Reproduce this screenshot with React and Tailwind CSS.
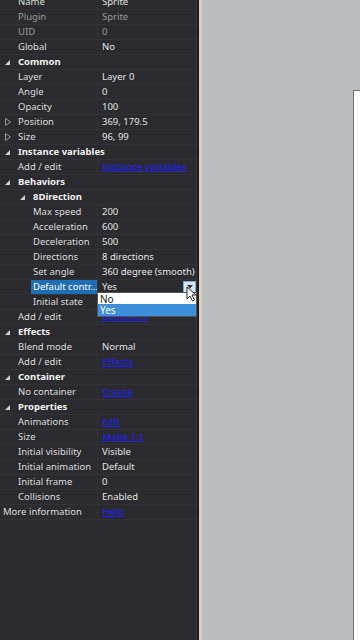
import React from "react";

const rows = [
  { label: "Name", value: "Sprite" },
  { label: "Plugin", value: "Sprite", dim: true },
  { label: "UID", value: "0", dim: true },
  { label: "Global", value: "No" },
  { label: "Common", header: true },
  { label: "Layer", value: "Layer 0" },
  { label: "Angle", value: "0" },
  { label: "Opacity", value: "100" },
  { label: "Position", value: "369, 179.5", collapsed: true },
  { label: "Size", value: "96, 99", collapsed: true },
  { label: "Instance variables", header: true },
  { label: "Add / edit", link: "Instance variables" },
  { label: "Behaviors", header: true },
  { label: "8Direction", header: true, level: 1 },
  { label: "Max speed", value: "200", level: 1 },
  { label: "Acceleration", value: "600", level: 1 },
  { label: "Deceleration", value: "500", level: 1 },
  { label: "Directions", value: "8 directions", level: 1 },
  { label: "Set angle", value: "360 degree (smooth)", level: 1 },
  { label: "Default contr...", value: "Yes", level: 1, selected: true },
  { label: "Initial state", value: "", level: 1 },
  { label: "Add / edit", link: "Behaviors" },
  { label: "Effects", header: true },
  { label: "Blend mode", value: "Normal" },
  { label: "Add / edit", link: "Effects" },
  { label: "Container", header: true },
  { label: "No container", link: "Create" },
  { label: "Properties", header: true },
  { label: "Animations", link: "Edit" },
  { label: "Size", link: "Make 1:1" },
  { label: "Initial visibility", value: "Visible" },
  { label: "Initial animation", value: "Default" },
  { label: "Initial frame", value: "0" },
  { label: "Collisions", value: "Enabled" },
  { label: "More information", link: "Help", level: -1 },
];

const Expanded = () => (
  <svg width="5" height="5" viewBox="0 0 5 5" className="shrink-0">
    <path d="M5 0 L5 5 L0 5 Z" fill="#d0d0d0" />
  </svg>
);

const Collapsed = () => (
  <svg width="6" height="8" viewBox="0 0 6 8" className="shrink-0">
    <path d="M0.5 0.5 L5.5 4 L0.5 7.5 Z" fill="none" stroke="#9a9a9a" strokeWidth="1" />
  </svg>
);

const Row = ({ row }) => {
  const level = row.level || 0;
  const pad = level === -1 ? 3 : 18 + level * 15;
  return (
    <div className="h-[15px] flex items-center border-b border-[#323238] relative">
      {(row.header || row.collapsed) && (
        <div
          className="absolute top-0 h-full flex items-center"
          style={{ left: pad - 13 }}
        >
          {row.header ? <Expanded /> : <Collapsed />}
        </div>
      )}
      <div className="w-[97px] h-full flex items-center shrink-0" style={{ paddingLeft: pad - 2 }}>
        <span
          className={
            "h-full flex items-center px-[2px] whitespace-nowrap " +
            (row.selected ? "bg-[#1f6db3] text-white " : "") +
            (row.header
              ? "font-bold text-[#f2f2f2]"
              : row.dim
              ? "text-[#9c9c9c]"
              : "text-[#dedede]")
          }
          style={row.selected ? { width: 97 - pad + 2 } : undefined}
        >
          {row.label}
        </span>
      </div>
      {!row.header && (
        <div className="flex-1 h-full flex items-center border-l border-[#323238] pl-[4px] whitespace-nowrap">
          {row.link ? (
            <span className="text-[#2222ee] font-semibold underline blur-[0.5px]">{row.link}</span>
          ) : (
            <span className={row.dim ? "text-[#9c9c9c]" : "text-[#e4e4e4]"}>{row.value}</span>
          )}
        </div>
      )}
    </div>
  );
};

export default function App() {
  return (
    <div
      className="w-[360px] h-[640px] flex overflow-hidden text-[9.5px]"
      style={{ fontFamily: '"Noto Sans", "Open Sans", sans-serif' }}
    >
      <div className="w-[197px] h-full bg-[#2a2a2f] relative shrink-0 border-r border-[#3a3a40]">
        <div className="-mt-[5px]">
          {rows.map((row, i) => (
            <Row key={i} row={row} />
          ))}
        </div>

        {/* combo button */}
        <div className="absolute left-[183px] top-[281px] w-[13px] h-[12px] bg-[#d6e6f4] border border-[#7aa6cf] flex items-center justify-center">
          <svg width="6" height="4" viewBox="0 0 6 4">
            <path d="M0 0 L6 0 L3 3.5 Z" fill="#333" />
          </svg>
        </div>

        {/* dropdown list */}
        <div className="absolute left-[97px] top-[292px] w-[100px] border border-[#555] bg-white text-[10px]">
          <div className="h-[11px] flex items-center pl-[2px] text-[#222] leading-none">No</div>
          <div className="h-[12px] flex items-center pl-[2px] bg-[#3d8fd9] text-white leading-none">Yes</div>
        </div>

        {/* cursor */}
        <svg
          className="absolute left-[186px] top-[286px]"
          width="11"
          height="16"
          viewBox="0 0 11 16"
        >
          <path
            d="M1 1 L1 13 L4 10 L6.5 15 L8.5 14 L6 9 L10 9 Z"
            fill="#ffffff"
            stroke="#222"
            strokeWidth="1"
          />
        </svg>
      </div>

      <div className="w-[2px] h-full bg-[#1c1c20] shrink-0" />
      <div className="w-[3px] h-full bg-[#d9d1bd] shrink-0" />

      <div className="flex-1 h-full bg-[#babcc0] pt-[90px] pl-[151px]">
        <div className="w-full h-full bg-white border-l border-t border-[#6e6e70]" />
      </div>
    </div>
  );
}
